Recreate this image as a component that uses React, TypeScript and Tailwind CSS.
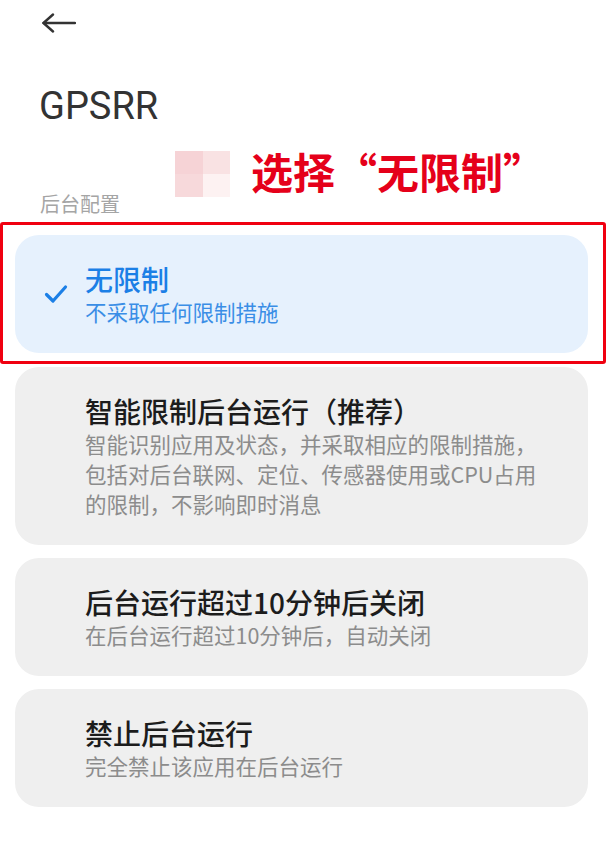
import React from "react";

const cjk = { fontFamily: '"Noto Sans CJK SC", "Noto Sans", sans-serif' };

type Opt = { title: string; desc: string[]; selected?: boolean };

const options: Opt[] = [
  { title: "无限制", desc: ["不采取任何限制措施"], selected: true },
  {
    title: "智能限制后台运行（推荐）",
    desc: [
      "智能识别应用及状态，并采取相应的限制措施，",
      "包括对后台联网、定位、传感器使用或CPU占用",
      "的限制，不影响即时消息",
    ],
  },
  { title: "后台运行超过10分钟后关闭", desc: ["在后台运行超过10分钟后，自动关闭"] },
  { title: "禁止后台运行", desc: ["完全禁止该应用在后台运行"] },
];

function Card({ o }: { o: Opt }) {
  return (
    <div
      className={
        "flex items-center rounded-[24px] py-[26px] " +
        (o.selected ? "bg-[#e6f1fd]" : "bg-[#efefef]")
      }
    >
      <div className="w-[70px] flex justify-center pl-[12px]">
        {o.selected && (
          <svg width="24" height="20" viewBox="0 0 24 20" fill="none">
            <path d="M2.5 10.5 L9 17 L21.5 3" stroke="#1b7fe6" strokeWidth="3.2" strokeLinecap="round" strokeLinejoin="round" />
          </svg>
        )}
      </div>
      <div className="flex flex-col">
        <div
          className={
            "text-[28px] leading-[36px] font-medium whitespace-nowrap " +
            (o.selected ? "text-[#1b7fe6]" : "text-[#1c1c1c]")
          }
        >
          {o.title}
        </div>
        {o.desc.map((d, i) => (
          <div
            key={i}
            className={
              "text-[21.5px] leading-[30px] whitespace-nowrap " +
              (o.selected ? "text-[#3a8ee6]" : "text-[#8c8c8c]")
            }
          >
            {d}
          </div>
        ))}
      </div>
    </div>
  );
}

export default function App() {
  return (
    <div className="w-[606px] h-[858px] bg-white relative overflow-hidden" style={cjk}>
      <div className="pt-[13px] pl-[42px] h-[34px]">
        <svg width="34" height="20" viewBox="0 0 34 20" fill="none">
          <path d="M1.5 10 H33" stroke="#333" strokeWidth="2.4" strokeLinecap="round" />
          <path d="M11 1.5 L1.5 10 L11 18.5" stroke="#333" strokeWidth="2.4" strokeLinecap="round" strokeLinejoin="round" />
        </svg>
      </div>
      <div
        className="mt-[50px] ml-[39px] text-[38px] leading-[44px] text-[#333]"
        style={{ fontFamily: 'Roboto, "Noto Sans", sans-serif' }}
      >
        GPSRR
      </div>
      <div className="relative h-[76px]">
        <div className="absolute left-[175px] top-[23px] grid grid-cols-2 w-[55px] h-[46px]">
          <div className="bg-[#f6d3d6]" />
          <div className="bg-[#f9e2e3]" />
          <div className="bg-[#f7d9db]" />
          <div className="bg-[#fdf2f2]" />
        </div>
        <div className="absolute left-[251px] top-[14px] text-[42px] leading-[58px] font-bold text-[#e5001a] whitespace-nowrap">
          选择“无限制”
        </div>
        <div className="absolute left-[40px] bottom-[-12px] text-[20px] leading-[24px] text-[#a5a5a5]">
          后台配置
        </div>
      </div>
      <div className="mt-[31px] pl-[15px] pr-[18px] flex flex-col gap-[13px]">
        {options.map((o, i) =>
          o.selected ? (
            <div key={i} className="relative mb-[1px]">
              <div className="absolute left-[-15px] right-[-18px] top-[-13px] bottom-[-11px] border-[3px] border-[#f00010] rounded-[3px]" />
              <Card o={o} />
            </div>
          ) : (
            <Card key={i} o={o} />
          )
        )}
      </div>
    </div>
  );
}
